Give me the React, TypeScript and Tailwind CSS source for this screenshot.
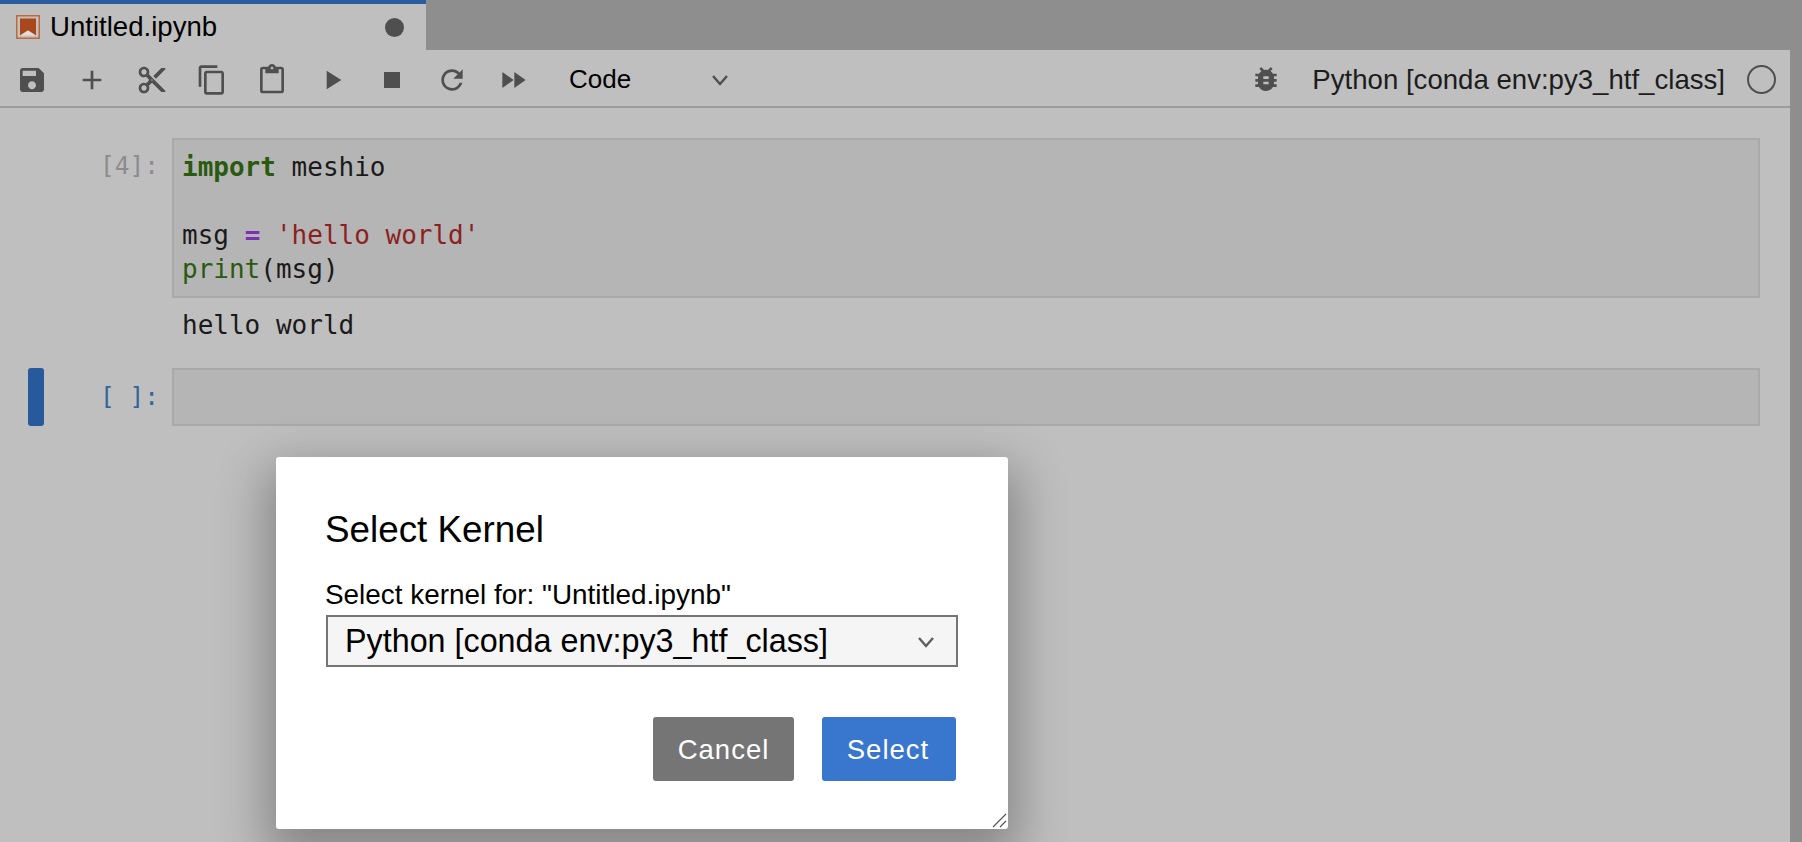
const SANS = "font-['Liberation_Sans',Arial,sans-serif]";

// material paths, same set the notebook toolbar uses
const ICONS = {
  save: "M17 3H5c-1.11 0-2 .9-2 2v14c0 1.1.89 2 2 2h14c1.1 0 2-.9 2-2V7l-4-4zm-5 16c-1.66 0-3-1.34-3-3s1.34-3 3-3 3 1.34 3 3-1.34 3-3 3zm3-10H5V5h10v4z",
  add: "M19 13h-6v6h-2v-6H5v-2h6V5h2v6h6v2z",
  cut: "M9.64 7.64c.23-.5.36-1.05.36-1.64 0-2.21-1.79-4-4-4S2 3.79 2 6s1.79 4 4 4c.59 0 1.14-.13 1.64-.36L10 12l-2.36 2.36C7.14 14.13 6.59 14 6 14c-2.21 0-4 1.79-4 4s1.79 4 4 4 4-1.79 4-4c0-.59-.13-1.14-.36-1.64L12 14l7 7h3v-1L9.64 7.64zM6 8c-1.1 0-2-.89-2-2s.9-2 2-2 2 .89 2 2-.9 2-2 2zm0 12c-1.1 0-2-.89-2-2s.9-2 2-2 2 .89 2 2-.9 2-2 2zm6-7.5c-.28 0-.5-.22-.5-.5s.22-.5.5-.5.5.22.5.5-.22.5-.5.5zM19 3l-6 6 2 2 7-7V3z",
  copy: "M16 1H4c-1.1 0-2 .9-2 2v14h2V3h12V1zm3 4H8c-1.1 0-2 .9-2 2v14c0 1.1.9 2 2 2h11c1.1 0 2-.9 2-2V7c0-1.1-.9-2-2-2zm0 16H8V7h11v14z",
  paste: "M19 2h-4.18C14.4.84 13.3 0 12 0c-1.3 0-2.4.84-2.82 2H5c-1.1 0-2 .9-2 2v16c0 1.1.9 2 2 2h14c1.1 0 2-.9 2-2V4c0-1.1-.9-2-2-2zm-7 0c.55 0 1 .45 1 1s-.45 1-1 1-1-.45-1-1 .45-1 1-1zm7 18H5V4h2v3h10V4h2v16z",
  run: "M8 5v14l11-7z",
  stop: "M6 6h12v12H6z",
  restart: "M17.65 6.35C16.2 4.9 14.21 4 12 4c-4.42 0-7.99 3.58-7.99 8s3.57 8 7.99 8c3.73 0 6.84-2.55 7.73-6h-2.08c-.82 2.33-3.04 4-5.65 4-3.31 0-6-2.69-6-6s2.69-6 6-6c1.66 0 3.14.69 4.22 1.78L13 11h7V4l-2.35 2.35z",
  forward: "M4 18l8.5-6L4 6v12zm9-12v12l8.5-6L13 6z",
  bug: "M20 8h-2.81c-.45-.78-1.07-1.45-1.82-1.96L17 4.41 15.59 3l-2.17 2.17C12.96 5.06 12.49 5 12 5c-.49 0-.96.06-1.41.17L8.41 3 7 4.41l1.62 1.63C7.88 6.55 7.26 7.22 6.81 8H4v2h2.09c-.05.33-.09.66-.09 1v1H4v2h2v1c0 .34.04.67.09 1H4v2h2.81c1.04 1.79 2.97 3 5.19 3s4.15-1.21 5.19-3H20v-2h-2.09c.05-.33.09-.66.09-1v-1h2v-2h-2v-1c0-.34-.04-.67-.09-1H20V8zm-6 8h-4v-2h4v2zm0-4h-4v-2h4v2z",
};

function Icon({ d, className }: { d: string; className: string }) {
  return (
    <svg viewBox="0 0 24 24" className={`h-8 w-8 shrink-0 fill-[#4f4f4f] ${className}`}>
      <path d={d} />
    </svg>
  );
}

function Chevron({ className }: { className: string }) {
  return (
    <svg viewBox="0 0 18 12" className={`fill-none stroke-[2.4] ${className}`}>
      <path d="M2 2l7 8 7-8" />
    </svg>
  );
}

function Toolbar() {
  return (
    <div className="flex h-[58px] items-center border-b-2 border-[#9c9c9c] bg-[#bfbfbf] pt-[3px] pl-4">
      <Icon d={ICONS.save} className="" />
      <Icon d={ICONS.add} className="ml-[28px]" />
      <Icon d={ICONS.cut} className="ml-[28px]" />
      <Icon d={ICONS.copy} className="ml-[28px]" />
      <Icon d={ICONS.paste} className="ml-[28px]" />
      <Icon d={ICONS.run} className="ml-[28px]" />
      <Icon d={ICONS.stop} className="ml-[28px]" />
      <Icon d={ICONS.restart} className="ml-[28px]" />
      <Icon d={ICONS.forward} className="ml-[29px]" />
      <span className={`ml-[40px] text-[26px] text-black ${SANS}`}>Code</span>
      <Chevron className="ml-[80px] h-[12px] w-[18px] stroke-[#4f4f4f]" />
      <div className="ml-auto flex items-center pr-[14px]">
        <Icon d={ICONS.bug} className="" />
        <span className={`ml-[30px] text-[27.6px] text-[#1c1c1c] ${SANS}`}>
          Python [conda env:py3_htf_class]
        </span>
        <div className="ml-[22px] h-[29px] w-[29px] rounded-full border-2 border-[#4f4f4f]" />
      </div>
    </div>
  );
}

const MONO = "font-['DejaVu_Sans_Mono',monospace] text-[26px] leading-[34px]";
const PROMPT = "pr-[13px] text-right text-[24.5px]";

function Notebook() {
  return (
    <div className="flex-1 bg-[#bfbfbf] pt-[30px]">
      {/* executed cell */}
      <div className={`flex ${MONO}`}>
        <div className={`w-[172px] shrink-0 pt-[11px] text-[#8c8c8c] ${PROMPT}`}>[4]:</div>
        <div className="mr-[30px] h-[160px] flex-1 border-2 border-[#a9a9a9] bg-[#b5b5b5] pt-[10px] pl-2 text-[#1a1a1a]">
          <div>
            <span className="font-bold text-[#2a5a10]">import</span> meshio
          </div>
          <div>&nbsp;</div>
          <div>
            msg <span className="font-bold text-[#7b2fb5]">=</span>{" "}
            <span className="text-[#8c1f1f]">'hello world'</span>
          </div>
          <div>
            <span className="text-[#2a5a10]">print</span>(msg)
          </div>
        </div>
      </div>
      <div className={`ml-[182px] pt-[10px] text-[#1a1a1a] ${MONO}`}>hello world</div>

      {/* active cell */}
      <div className={`mt-[26px] flex ${MONO}`}>
        <div className="ml-[28px] h-[58px] w-4 shrink-0 rounded-[3px] bg-[#265a9c]" />
        <div className={`w-[128px] shrink-0 pt-[12px] text-[#33659c] ${PROMPT}`}>[ ]:</div>
        <div className="mr-[30px] h-[58px] flex-1 border-2 border-[#a9a9a9] bg-[#b5b5b5]" />
      </div>
    </div>
  );
}

function KernelDialog() {
  return (
    <div className={`absolute top-[457px] left-[276px] flex h-[372px] w-[732px] flex-col rounded-[3px] bg-white pt-[52px] pr-[50px] pl-[49px] shadow-[0_20px_50px_10px_rgba(0,0,0,0.3)] ${SANS}`}>
      <h2 className="text-[36.8px] leading-[42px] text-black">Select Kernel</h2>
      <div className="mt-[30px] text-[27.9px] leading-[28px] text-black">Select kernel for: "Untitled.ipynb"</div>
      <div className="mt-[6px] ml-[1px] flex h-[52px] items-center justify-between border-2 border-[#757575] bg-[#f5f5f5] pt-[1px] pr-[21px] pl-[17px] text-[32.3px] text-black">
        <span>Python [conda env:py3_htf_class]</span>
        <Chevron className="h-[12px] w-[18px] stroke-[#5e5e5e]" />
      </div>
      <div className="mt-[50px] flex justify-end gap-[28px] pr-[2px]">
        <button className="h-[64px] w-[141px] rounded-[3px] bg-[#757575] pt-[1px] text-[27.5px] tracking-[1px] text-white">Cancel</button>
        <button className="h-[64px] w-[134px] rounded-[3px] bg-[#3976ce] pt-[1px] pr-[2px] text-[27.5px] tracking-[1px] text-white">Select</button>
      </div>
      {/* resize grip */}
      <svg viewBox="0 0 16 16" className="absolute right-[1px] bottom-[1px] h-4 w-4 fill-none stroke-[#555] stroke-[1.2]">
        <path d="M2 15L15 2M9 15l6-6" />
      </svg>
    </div>
  );
}

export default function App() {
  return (
    <div className="relative h-[842px] w-[1802px] overflow-hidden bg-[#8e8e8e]">
      <div className="flex h-[842px] w-[1790px] flex-col">
        {/* tab bar */}
        <div className="h-[50px] shrink-0">
          <div className={`flex h-[50px] w-[426px] items-center border-t-4 border-[#2b5c9e] bg-[#bfbfbf] pl-4 ${SANS}`}>
            <svg viewBox="0 0 24 24" className="h-6 w-6 shrink-0">
              <rect x="0.75" y="0.75" width="22.5" height="22.5" className="fill-[#c4c0bc] stroke-[#bd6a3e] stroke-[1.5]" />
              <path d="M4 3.5h16v17l-8-5-8 5z" className="fill-[#a8481c]" />
              <path d="M4 20.5l8-5 8 5z" className="fill-[#e6dcd4]" />
            </svg>
            <span className="ml-[10px] text-[27.6px] text-black">Untitled.ipynb</span>
            <div className="mr-[22px] ml-auto h-[19px] w-[19px] rounded-full bg-[#4f4f4f]" />
          </div>
        </div>
        <Toolbar />
        <Notebook />
      </div>
      <KernelDialog />
    </div>
  );
}
